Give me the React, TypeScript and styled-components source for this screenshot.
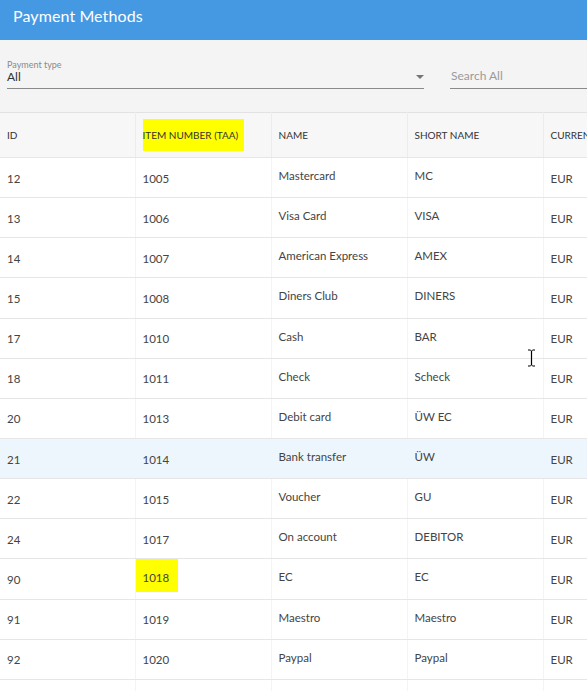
import React from "react";
import styled, { createGlobalStyle } from "styled-components";

const Global = createGlobalStyle`
  html, body { margin: 0; padding: 0; background: #ffffff; }
  body { font-family: "Lato", "Noto Sans", "Liberation Sans", sans-serif; overflow: hidden; }
  * { box-sizing: border-box; }
`;

const Page = styled.div`
  position: relative;
  width: 587px;
  height: 691px;
  overflow: hidden;
  display: flex;
  flex-direction: column;
`;

const AppBar = styled.header`
  height: 40px;
  flex: 0 0 40px;
  background: #4599e2;
  display: flex;
  align-items: center;
  padding: 0 13px 9px;
`;

const Title = styled.h1`
  margin: 0;
  font-size: 16px;
  font-weight: 400;
  color: #ffffff;
  letter-spacing: 0.1px;
`;

const FilterBar = styled.div`
  flex: 0 0 72px;
  background: #f4f4f4;
  display: flex;
  align-items: flex-start;
  gap: 26px;
  padding: 19px 0 0 7px;
`;

const Field = styled.div<{ $width: number }>`
  width: ${(p) => p.$width}px;
  flex: 0 0 auto;
  height: 30px;
  border-bottom: 1px solid #8a8a8a;
  position: relative;
  display: flex;
  flex-direction: column;
  justify-content: flex-end;
  padding-bottom: 4px;
`;

const FieldLabel = styled.span`
  font-size: 9px;
  color: #8a8a8a;
  line-height: 11px;
`;

const FieldValue = styled.span`
  font-size: 12px;
  color: #333;
  line-height: 14px;
`;

const Placeholder = styled.span`
  font-size: 12px;
  color: #9a9a9a;
  line-height: 14px;
  padding-left: 1px;
  padding-bottom: 1px;
`;

const Arrow = styled.span`
  position: absolute;
  right: 0;
  bottom: 9px;
  width: 0;
  height: 0;
  border-left: 4.5px solid transparent;
  border-right: 4.5px solid transparent;
  border-top: 4px solid #757575;
`;

const Table = styled.table`
  border-collapse: collapse;
  table-layout: fixed;
  width: 680px;
  border-top: 1px solid #e2e2e2;
`;

const Col = styled.col<{ $w: number }>`
  width: ${(p) => p.$w}px;
`;

const HeadCell = styled.th`
  height: 45px;
  background: #f7f7f7;
  text-align: left;
  font-weight: 400;
  font-size: 10px;
  color: #333;
  padding: 0 7px;
  border-right: 1px solid #ececec;
  border-bottom: 1px solid #e6e6e6;
  white-space: nowrap;
  overflow: hidden;
`;

const Mark = styled.span<{ $pad?: string }>`
  background: #ffff00;
  display: inline-block;
  padding: ${(p) => p.$pad || "0"};
`;

const Row = styled.tr<{ $active?: boolean }>`
  height: 40.15px;
  background: ${(p) => (p.$active ? "#eef6fd" : "#ffffff")};
`;

const Cell = styled.td<{ $raise?: boolean }>`
  font-size: 11.5px;
  color: #444;
  padding: ${(p) => (p.$raise ? "0 7px 4px" : "1px 7px 0")};
  border-right: 1px solid #f4f4f4;
  border-bottom: 1px solid #e6e6e6;
  white-space: nowrap;
  overflow: hidden;
  vertical-align: middle;
`;

const MarkCell = styled(Cell)`
  padding: 0;
  vertical-align: top;
`;

const Cursor = styled.svg`
  position: absolute;
  left: 526px;
  top: 349px;
`;

type Item = { id: string; no: string; name: string; short: string; hl?: boolean; active?: boolean };

const rows: Item[] = [
  { id: "12", no: "1005", name: "Mastercard", short: "MC" },
  { id: "13", no: "1006", name: "Visa Card", short: "VISA" },
  { id: "14", no: "1007", name: "American Express", short: "AMEX" },
  { id: "15", no: "1008", name: "Diners Club", short: "DINERS" },
  { id: "17", no: "1010", name: "Cash", short: "BAR" },
  { id: "18", no: "1011", name: "Check", short: "Scheck" },
  { id: "20", no: "1013", name: "Debit card", short: "ÜW EC" },
  { id: "21", no: "1014", name: "Bank transfer", short: "ÜW", active: true },
  { id: "22", no: "1015", name: "Voucher", short: "GU" },
  { id: "24", no: "1017", name: "On account", short: "DEBITOR" },
  { id: "90", no: "1018", name: "EC", short: "EC", hl: true },
  { id: "91", no: "1019", name: "Maestro", short: "Maestro" },
  { id: "92", no: "1020", name: "Paypal", short: "Paypal" },
];

export default function App() {
  return (
    <Page>
      <Global />
      <AppBar>
        <Title>Payment Methods</Title>
      </AppBar>
      <FilterBar>
        <Field $width={417}>
          <FieldLabel>Payment type</FieldLabel>
          <FieldValue>All</FieldValue>
          <Arrow />
        </Field>
        <Field $width={200}>
          <Placeholder>Search All</Placeholder>
        </Field>
      </FilterBar>
      <Table>
        <colgroup>
          <Col $w={135} />
          <Col $w={136} />
          <Col $w={136} />
          <Col $w={136} />
          <Col $w={137} />
        </colgroup>
        <thead>
          <tr>
            <HeadCell>ID</HeadCell>
            <HeadCell>
              <Mark $pad="10px 6px 10px 0">ITEM NUMBER (TAA)</Mark>
            </HeadCell>
            <HeadCell>NAME</HeadCell>
            <HeadCell>SHORT NAME</HeadCell>
            <HeadCell>CURRENCY</HeadCell>
          </tr>
        </thead>
        <tbody>
          {rows.map((r) => (
            <Row key={r.id} $active={r.active}>
              <Cell>{r.id}</Cell>
              {r.hl ? (
                <MarkCell>
                  <Mark $pad="12px 9px 8px 7px">{r.no}</Mark>
                </MarkCell>
              ) : (
                <Cell>{r.no}</Cell>
              )}
              <Cell $raise>{r.name}</Cell>
              <Cell $raise>{r.short}</Cell>
              <Cell>EUR</Cell>
            </Row>
          ))}
          <Row>
            <Cell />
            <Cell />
            <Cell $raise />
            <Cell $raise />
            <Cell />
          </Row>
        </tbody>
      </Table>
      <Cursor width="11" height="18" viewBox="0 0 11 18">
        <path d="M2 1h2.5M6.5 1H9M5.5 2v14M2 17h2.5M6.5 17H9" stroke="#000" strokeWidth="1.2" fill="none" />
        <path d="M4.5 1.5q1 0 1 1M6.5 1.5q-1 0-1 1M4.5 16.5q1 0 1-1M6.5 16.5q-1 0-1-1" stroke="#000" strokeWidth="1" fill="none" />
      </Cursor>
    </Page>
  );
}
